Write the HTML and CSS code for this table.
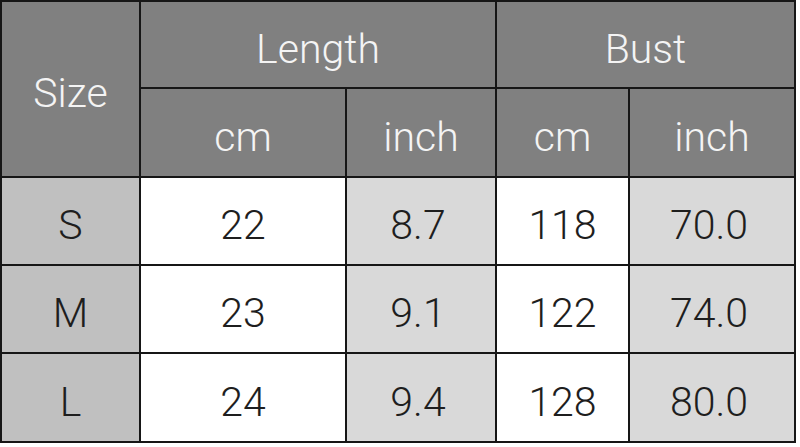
FILE: index.html
```html
<!DOCTYPE html>
<html>
<head>
<meta charset="utf-8">
<link rel="stylesheet" href="styles.css">
</head>
<body>
<div class="table">
  <div class="cell head size">Size</div>
  <div class="cell head span2">Length</div>
  <div class="cell head span2">Bust</div>
  <div class="cell head">cm</div>
  <div class="cell head">inch</div>
  <div class="cell head">cm</div>
  <div class="cell head">inch</div>

  <div class="cell label">S</div>
  <div class="cell cm">22</div>
  <div class="cell inch">8.7</div>
  <div class="cell cm">118</div>
  <div class="cell inch">70.0</div>

  <div class="cell label">M</div>
  <div class="cell cm">23</div>
  <div class="cell inch">9.1</div>
  <div class="cell cm">122</div>
  <div class="cell inch">74.0</div>

  <div class="cell label">L</div>
  <div class="cell cm">24</div>
  <div class="cell inch">9.4</div>
  <div class="cell cm">128</div>
  <div class="cell inch">80.0</div>
</div>
</body>
</html>
```
FILE: styles.css
```css
html, body {
  margin: 0;
  padding: 0;
  background: #ffffff;
}
.table {
  display: grid;
  grid-template-columns: 137px 204px 148px 131px 164px;
  grid-template-rows: 85px 87px 86px 86px 87px;
  gap: 2px;
  padding: 2px;
  background: #161616;
  width: max-content;
  font-family: Roboto, "Noto Sans", sans-serif;
  font-size: 41px;
  font-weight: 300;
}
.cell {
  display: flex;
  align-items: center;
  justify-content: center;
  padding-top: 8px;
  color: #1e1e1e;
}
.head {
  background: #808080;
  color: #f4f4f4;
}
.size {
  grid-row: span 2;
}
.span2 {
  grid-column: span 2;
}
.label {
  background: #c0c0c0;
}
.cm {
  background: #ffffff;
}
.inch {
  background: #d9d9d9;
  padding-right: 6px;
}
```
